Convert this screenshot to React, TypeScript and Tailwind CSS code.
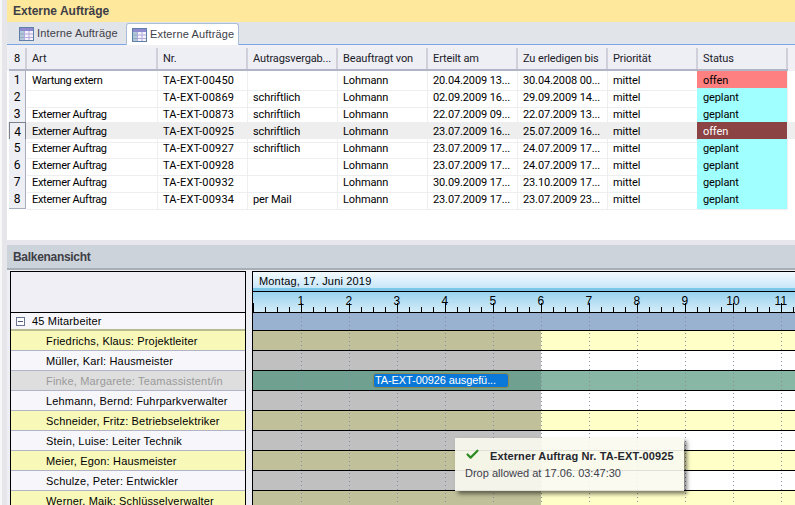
import { Check } from 'lucide-react'

const font = { fontFamily: '"Liberation Sans", Arial, sans-serif' }
const tableFont = { fontFamily: 'Roboto, "Liberation Sans", sans-serif' }

const orders = [
  { art: 'Wartung extern', nr: 'TA-EXT-00450', verg: '', erteilt: '20.04.2009 13...', bis: '30.04.2008 00...', status: 'offen' },
  { art: '', nr: 'TA-EXT-00869', verg: 'schriftlich', erteilt: '02.09.2009 16...', bis: '29.09.2009 14...', status: 'geplant' },
  { art: 'Externer Auftrag', nr: 'TA-EXT-00873', verg: 'schriftlich', erteilt: '22.07.2009 09...', bis: '22.07.2009 13...', status: 'geplant' },
  { art: 'Externer Auftrag', nr: 'TA-EXT-00925', verg: 'schriftlich', erteilt: '23.07.2009 16...', bis: '25.07.2009 16...', status: 'offen', selected: true },
  { art: 'Externer Auftrag', nr: 'TA-EXT-00927', verg: 'schriftlich', erteilt: '23.07.2009 17...', bis: '24.07.2009 17...', status: 'geplant' },
  { art: 'Externer Auftrag', nr: 'TA-EXT-00928', verg: '', erteilt: '23.07.2009 17...', bis: '24.07.2009 17...', status: 'geplant' },
  { art: 'Externer Auftrag', nr: 'TA-EXT-00932', verg: '', erteilt: '30.09.2009 17...', bis: '23.10.2009 17...', status: 'geplant' },
  { art: 'Externer Auftrag', nr: 'TA-EXT-00934', verg: 'per Mail', erteilt: '23.07.2009 17...', bis: '23.07.2009 23...', status: 'geplant' },
]

const headers = ['Art', 'Nr.', 'Autragsvergab...', 'Beauftragt von', 'Erteilt am', 'Zu erledigen bis', 'Priorität', 'Status']
const gridCols = 'grid grid-cols-[18px_131px_90px_90px_90px_90px_90px_90px_90px]'

const staff = [
  { name: 'Friedrichs, Klaus: Projektleiter', tone: 'yellow' },
  { name: 'Müller, Karl: Hausmeister', tone: 'white' },
  { name: 'Finke, Margarete: Teamassistent/in', tone: 'off' },
  { name: 'Lehmann, Bernd: Fuhrparkverwalter', tone: 'white' },
  { name: 'Schneider, Fritz: Betriebselektriker', tone: 'yellow' },
  { name: 'Stein, Luise: Leiter Technik', tone: 'white' },
  { name: 'Meier, Egon: Hausmeister', tone: 'yellow' },
  { name: 'Schulze, Peter: Entwickler', tone: 'white' },
  { name: 'Werner, Maik: Schlüsselverwalter', tone: 'yellow' },
]

const hours = [1, 2, 3, 4, 5, 6, 7, 8, 9, 10, 11]

function TableIcon() {
  return (
    <svg width="15" height="14" viewBox="0 0 15 14" className="shrink-0">
      <rect x="0.5" y="0.5" width="14" height="13" fill="#f4f2fb" stroke="#5d7fa8" />
      <rect x="1" y="1" width="13" height="3" fill="#8f8ad0" />
      <path d="M1 7h13M1 10.5h13M5.5 4v9M10 4v9" stroke="#b3a9dc" fill="none" />
      <rect x="1" y="4" width="4" height="9" fill="#7aa6b8" opacity="0.55" />
    </svg>
  )
}

function Ruler() {
  const ticks = Array.from({ length: 46 }, (_, i) => i)
  return (
    <svg width="543" height="20" className="block">
      {ticks.map((i) => {
        const x = i * 12 + 0.5
        const major = i % 4 === 0
        return <line key={i} x1={x} x2={x} y1={major ? 11 : 15} y2="20" stroke="#000" />
      })}
    </svg>
  )
}

function TimelineRow({ tone }: { tone: string }) {
  const past = tone === 'yellow' ? 'bg-[#c0c09a]' : tone === 'off' ? 'bg-[#70a090]' : 'bg-[#c0c0c0]'
  const free = tone === 'yellow' ? 'bg-[#ffffc8]' : tone === 'off' ? 'bg-[#88b8a5]' : 'bg-white'
  return (
    <div className="flex h-5 border-b border-black">
      <div className={`w-[288px] shrink-0 ${past}`} />
      <div className={`flex-1 ${free}`} />
    </div>
  )
}

export default function App() {
  return (
    <div className="relative flex h-[505px] w-[795px] overflow-hidden bg-[#f0f0f5] text-[11px] text-black" style={font}>
      <div className="w-[7px] shrink-0 border-l-[2px] border-l-[#f7f7f7] bg-[#e6e6ea]" />

      <div className="flex min-w-0 flex-1 flex-col">
        <div className="flex h-[22px] shrink-0 items-center bg-[#fee89b] pl-[6px] text-[12px] font-bold text-[#3e3e46]">
          Externe Aufträge
        </div>

        <div className="flex h-[23px] shrink-0 items-end gap-px border-b border-[#7aa7e8] bg-[#e1e4e8] pl-[5px] tracking-[0.15px]">
          <div className="flex h-[21px] w-[113px] items-center gap-[3px] pl-[7px] text-[#404048]">
            <TableIcon />
            <span>Interne Aufträge</span>
          </div>
          <div className="-mb-px flex h-[22px] w-[113px] items-center gap-[3px] rounded-t-[3px] border border-b-0 border-[#a9bed8] bg-white pl-[5px] text-[#404048]">
            <TableIcon />
            <span>Externe Aufträge</span>
          </div>
        </div>

        <div className="flex h-[195px] shrink-0 flex-col pt-[3px] tracking-[-0.12px]" style={tableFont}>
          <div className="h-[23px] shrink-0 bg-[#f0f0f5] pl-[2px]">
            <div className={`${gridCols} h-[23px] w-fit border-b-2 border-[#b0b4c4] bg-[#eeeef5]`}>
              <div className="flex items-center justify-center border-r-2 border-[#d0d0da] pt-px">8</div>
              {headers.map((h) => (
                <div key={h} className="flex items-center border-r-2 border-[#d0d0da] pt-px pl-[5px] whitespace-nowrap text-[#202028]">
                  {h}
                </div>
              ))}
            </div>
          </div>
          <div className="flex-1 bg-white pl-[1px]">
            {orders.map((o, i) => {
              const statusBg = o.selected ? 'bg-[#8b4343] text-white' : o.status === 'offen' ? 'bg-[#ff8080]' : 'bg-[#a0ffff]'
              const rowBg = o.selected ? 'bg-[#eeeeee]' : ''
              const cell = 'flex items-center border-r border-b border-[#eceef0] pt-px pl-[5px] whitespace-nowrap overflow-hidden'
              return (
                <div key={o.nr} className={`${gridCols} h-[17px] pl-[1px] ${rowBg}`}>
                  <div className={`mr-[1px] mb-[1px] flex items-center justify-center border-r border-b ${o.selected ? 'border border-[#7a8290]' : 'border-[#a8acc0]'} bg-[#eeeef5] text-[12px]`}>
                    {i + 1}
                  </div>
                  <div className={`${cell} tracking-[-0.3px]`}>{o.art}</div>
                  <div className={`${cell} tracking-[0.2px]`}>{o.nr}</div>
                  <div className={cell}>{o.verg}</div>
                  <div className={cell}>Lohmann</div>
                  <div className={cell}>{o.erteilt}</div>
                  <div className={cell}>{o.bis}</div>
                  <div className={cell}>mittel</div>
                  <div className={`${cell} -ml-px pl-[6px] ${statusBg}`}>{o.status}</div>
                </div>
              )
            })}
          </div>
        </div>

        <div className="h-[5px] shrink-0 bg-[#e6e6ec]" />

        <div className="flex h-[25px] shrink-0 items-center border-b-2 border-b-[#a9adb6] bg-[#cdd3da] pl-[6px] text-[12px] font-bold tracking-[-0.3px] text-[#3e3e46]">
          Balkenansicht
        </div>

        <div className="relative flex min-h-0 flex-1 gap-[6px] bg-[#eeeef5] pt-[1px] pl-[3px] tracking-[0.17px]">
          <div className="w-[236px] shrink-0 border-x border-t border-black">
            <div className="h-[41px] border-b border-black bg-[#efeff5]" />
            <div className="flex h-[18px] items-center border-b-[2px] border-[#b8bc90] bg-[#f7f7fb] pl-[5px]">
              <span className="relative mr-[7px] h-[9px] w-[9px] border border-[#6b7590] bg-white">
                <span className="absolute top-[3px] left-[1px] h-px w-[5px] bg-[#4a5570]" />
              </span>
              45 Mitarbeiter
            </div>
            {staff.map((s) => (
              <div
                key={s.name}
                className={`flex h-5 items-center border-b border-[#b0b4c8] pt-px pl-[35px] whitespace-nowrap ${
                  s.tone === 'yellow' ? 'bg-[#f8f8b8]' : s.tone === 'off' ? 'bg-[#dedede] text-[#9a9a9a]' : 'bg-[#f7f7fb]'
                }`}
              >
                {s.name}
              </div>
            ))}
          </div>

          <div className="relative min-w-0 flex-1 border-t border-l border-black">
            <div className="flex h-[20px] items-center border-b border-b-black bg-gradient-to-b from-[#f4faff] to-[#bfe3f8] pl-[6px] shadow-[inset_0_-3px_0_#7cc6ea]">
              Montag, 17. Juni 2019
            </div>
            <div className="h-[21px] border-b border-black bg-gradient-to-b from-[#98d2ee] to-[#d4ecf8]">
              <Ruler />
            </div>
            <div className="h-[18px] border-b border-black bg-[#98b2d0]" />
            {staff.map((s) => (
              <TimelineRow key={s.name} tone={s.tone} />
            ))}

            {hours.map((h) => (
              <span key={h} className="absolute top-[22px] w-[20px] text-center text-[12px] leading-[14px]" style={{ left: h * 48 - 10 }}>
                {h}
              </span>
            ))}

            <svg className="absolute top-[41px] left-0" width="543" height="193">
              {hours.map((h) => (
                <line key={h} x1={h * 48 + 0.5} x2={h * 48 + 0.5} y1="0" y2="193" stroke="#8a8aa0" strokeDasharray="1 3" />
              ))}
            </svg>

            <div className="absolute top-[101px] left-[120px] flex h-[15px] w-[136px] items-center rounded-[3px] border border-[#8a8a50] bg-[#0a78d8] pl-[1px] tracking-[-0.1px] whitespace-nowrap text-white">
              TA-EXT-00926 ausgefü...
            </div>
          </div>

          <div className="absolute top-[168px] left-[448px] h-[53px] w-[229px] bg-[#fafaf0]/90 pt-[8px] pl-[10px] tracking-normal whitespace-nowrap shadow-[3px_3px_4px_rgba(0,0,0,0.5)]">
            <div className="flex h-[18px] items-center">
              <Check size={15} strokeWidth={3.5} className="mr-[10px] -translate-y-px text-[#2a8a20]" />
              <span className="translate-y-px font-bold tracking-[0.12px] text-[#26262e]">Externer Auftrag Nr. TA-EXT-00925</span>
            </div>
            <div className="mt-[1px] text-[#40404a]">Drop allowed at 17.06. 03:47:30</div>
          </div>
        </div>
      </div>
    </div>
  )
}
